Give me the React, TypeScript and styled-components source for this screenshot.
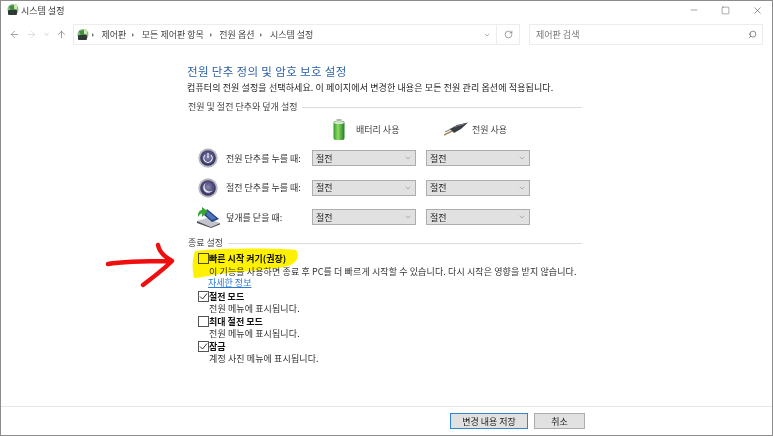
import React from 'react'
import styled, { createGlobalStyle } from 'styled-components'
import { ArrowLeft, ArrowRight, ArrowUp, ChevronDown, Minus, RotateCw, Search, Square, X } from 'lucide-react'

const GlobalStyle = createGlobalStyle`
	html, body {
		margin: 0;
		padding: 0;
		background: #fff;
		overflow: hidden;
	}
	body {
		font-family: 'Noto Sans CJK KR', 'Noto Sans', sans-serif;
		font-size: 9px;
		color: #222;
	}
`

const Window = styled.div`
	position: relative;
	box-sizing: border-box;
	width: 773px;
	height: 436px;
	display: flex;
	flex-direction: column;
	background: #fff;
	border: 1px solid #8c8c8c;
	filter: blur(0.3px);
`

const TitleBar = styled.div`
	height: 18px;
	display: flex;
	align-items: center;
	padding-left: 5px;
	gap: 1px;
	color: #333;
`

const Caption = styled.div`
	margin-left: auto;
	display: flex;
	align-items: center;
	gap: 22px;
	padding-right: 9px;
	color: #222;
`

const NavBar = styled.div`
	height: 21px;
	margin-top: 5px;
	display: flex;
	align-items: center;
	padding-right: 9px;
`

const NavButtons = styled.div`
	width: 72px;
	flex: none;
	display: flex;
	align-items: center;
	padding-left: 8px;
	box-sizing: border-box;
	gap: 6px;
`

const AddressBar = styled.div`
	width: 447px;
	height: 21px;
	box-sizing: border-box;
	display: flex;
	align-items: center;
	border: 1px solid #ececec;
	padding-left: 2px;
`

const Crumb = styled.span`
	color: #444;
	margin-right: 4px;
`

const CrumbSep = styled.span`
	width: 0;
	height: 0;
	margin: 0 7.5px 0 2px;
	border-left: 2.5px solid #777;
	border-top: 2.5px solid transparent;
	border-bottom: 2.5px solid transparent;
`

const AddressEnd = styled.div`
	margin-left: auto;
	display: flex;
	align-items: center;
	height: 100%;
`

const RefreshCell = styled.div`
	width: 22px;
	height: 100%;
	margin-left: 5px;
	display: flex;
	align-items: center;
	justify-content: center;
	border-left: 1px solid #ececec;
	color: #555;
`

const SearchBox = styled.div`
	margin-left: 9px;
	flex: 1;
	height: 21px;
	box-sizing: border-box;
	display: flex;
	align-items: center;
	justify-content: space-between;
	border: 1px solid #ececec;
	padding: 0 5px 0 6px;
	color: #777;
`

const Content = styled.div`
	flex: 1;
	padding: 18px 0 0 186px;
	width: 395px;
`

const Heading = styled.div`
	height: 16px;
	line-height: 16px;
	font-size: 11.5px;
	letter-spacing: 0.35px;
	color: #2b5fa8;
	white-space: nowrap;
`

const Description = styled.div`
	height: 14px;
	line-height: 14px;
	margin-top: 2px;
	color: #222;
	letter-spacing: 0.11px;
	white-space: nowrap;
`

const GroupTitle = styled.div<{ $top: number }>`
	height: 14px;
	line-height: 14px;
	margin-top: ${(p) => p.$top}px;
	padding-left: 1px;
	display: flex;
	align-items: center;
	gap: 5px;
	color: #444;
	white-space: nowrap;
	&::after {
		content: '';
		flex: 1;
		height: 1px;
		background: #dcdcdc;
	}
`

const PowerGrid = styled.div`
	display: grid;
	grid-template-columns: 115px 104px 104px;
	column-gap: 10px;
	row-gap: 13.5px;
	margin-top: 4px;
`

const SourceHead = styled.div<{ $inset: number; $gap: number }>`
	height: 22px;
	margin-bottom: -3.5px;
	display: flex;
	align-items: center;
	gap: ${(p) => p.$gap}px;
	padding-left: ${(p) => p.$inset}px;
	color: #444;
	white-space: nowrap;
`

const RowLabel = styled.div`
	height: 16px;
	display: flex;
	align-items: center;
	gap: 8px;
	padding-left: 11px;
	white-space: nowrap;
	color: #333;
`

const IconSlot = styled.span`
	width: 20px;
	height: 20px;
	flex: none;
	display: flex;
	align-items: center;
	justify-content: center;
`

const SelectBox = styled.div`
	height: 16px;
	box-sizing: border-box;
	display: flex;
	align-items: center;
	justify-content: space-between;
	padding: 0 3px 0 3px;
	background: #e1e1e1;
	border: 1px solid #adadad;
	color: #222;
`

const OptionList = styled.div`
	margin-top: 2px;
	padding-left: 11px;
`

const OptionRow = styled.label`
	display: flex;
	align-items: center;
	height: 13px;
	font-weight: 700;
	color: #111;
	white-space: nowrap;
`

const CheckBox = styled.span`
	box-sizing: border-box;
	width: 11px;
	height: 11px;
	flex: none;
	border: 1px solid #555;
	background: #fff;
	display: flex;
	align-items: center;
	justify-content: center;
`

const OptionNote = styled.div<{ $lead?: boolean }>`
	height: ${(p) => (p.$lead ? 11 : 12)}px;
	line-height: 12px;
	margin-top: ${(p) => (p.$lead ? 1 : 0)}px;
	padding-left: 11px;
	color: #333;
	letter-spacing: 0.11px;
	white-space: nowrap;
`

const MoreLink = styled.a`
	display: block;
	height: 13px;
	line-height: 12px;
	margin-left: 10px;
	color: #2a7ad5;
	text-decoration: underline;
`

const Footer = styled.div`
	height: 29px;
	box-sizing: border-box;
	border-top: 1px solid #e6e6e6;
	display: flex;
	justify-content: flex-end;
	gap: 6px;
	padding: 6px 187px 0 0;
`

const Button = styled.button<{ $primary?: boolean }>`
	height: 16px;
	width: ${(p) => (p.$primary ? 78 : 51)}px;
	padding: 0;
	font: inherit;
	color: #222;
	background: #e1e1e1;
	border: 1px solid ${(p) => (p.$primary ? '#2f86d8' : '#adadad')};
`

const Marker = styled.svg`
	position: absolute;
	left: -1px;
	top: -1px;
	width: 773px;
	height: 436px;
	pointer-events: none;
`

const Highlight = styled.path`
	mix-blend-mode: multiply;
	fill: #fff200;
`

const AppIcon = () => (
	<svg width="14" height="14" viewBox="0 0 14 14">
		<circle cx="7" cy="6.5" r="5.5" fill="#8fb98a" />
		<path d="M3 3 L9 2 L11 6 L5 8 Z" fill="#3f8f3d" />
		<rect x="2" y="7" width="9" height="5" rx="1" fill="#2e3a33" />
		<rect x="8" y="1" width="3" height="5" fill="#c9e8b4" />
	</svg>
)

const BatteryIcon = () => (
	<svg width="12" height="21" viewBox="0 0 12 21">
		<defs>
			<linearGradient id="batteryBody" x1="0" x2="1" y1="0" y2="0">
				<stop offset="0" stopColor="#2f9a2c" />
				<stop offset="0.4" stopColor="#8fdc62" />
				<stop offset="1" stopColor="#1f7d25" />
			</linearGradient>
		</defs>
		<rect x="3.5" y="0" width="5" height="2.5" fill="#a8b8a8" />
		<rect x="0.5" y="2" width="11" height="19" rx="2" fill="url(#batteryBody)" />
		<ellipse cx="6" cy="3.5" rx="5" ry="1.6" fill="#d5e6d0" />
	</svg>
)

const PlugIcon = () => (
	<svg width="24" height="14" viewBox="0 0 24 14">
		<path d="M0 13 L8 9" stroke="#a08a5a" strokeWidth="1.5" />
		<path d="M1 10 L7 7" stroke="#8a8a8a" strokeWidth="1.2" />
		<path d="M6 7 L13 3 L24 0.5 L17 7 L10 11 Z" fill="#3a3d42" />
		<path d="M10 5 L20 2" stroke="#7d8288" strokeWidth="1" />
	</svg>
)

const RoundBadge = ({ id, children }: { id: string; children: React.ReactNode }) => (
	<svg width="20" height="20" viewBox="0 0 20 20">
		<defs>
			<radialGradient id={id} cx="0.5" cy="0.45" r="0.6">
				<stop offset="0" stopColor="#8b8ab5" />
				<stop offset="0.75" stopColor="#3f3d6c" />
				<stop offset="1" stopColor="#24234a" />
			</radialGradient>
		</defs>
		<circle cx="10" cy="10" r="9.7" fill="#b9b9be" />
		<circle cx="10" cy="10" r="7.8" fill={`url(#${id})`} />
		{children}
	</svg>
)

const PowerIcon = () => (
	<RoundBadge id="powerFill">
		<path d="M7 7.2 A4.2 4.2 0 1 0 13 7.2" fill="none" stroke="#f2f2f7" strokeWidth="1.2" />
		<path d="M10 5 V10" stroke="#f2f2f7" strokeWidth="1.2" />
	</RoundBadge>
)

const SleepIcon = () => (
	<RoundBadge id="sleepFill">
		<path d="M8 5 A5.2 5.2 0 1 0 15 12 A4.6 4.6 0 0 1 8 5 Z" fill="#ecebf4" />
	</RoundBadge>
)

const LidIcon = () => (
	<svg width="24" height="22" viewBox="0 0 24 22" style={{ flex: 'none' }}>
		<path d="M1 15 L15 21 L24 17 L11 12 Z" fill="#c2c6cc" />
		<path d="M1 15 L1 17 L15 22 L24 18.5 L24 17 L15 21 Z" fill="#50535a" />
		<path d="M8 9 L11 3 L23 13 L16 16 Z" fill="#26407f" />
		<path d="M10 9 L12 5.5 L20.5 12.5 L16 14 Z" fill="#4f74bd" />
		<path d="M6 1 L6 4 C2.5 4.5 2 7 2 11 C3.5 8.5 5 7.5 6 7.5 L6 11 L12 5.5 Z" fill="#3aa537" />
	</svg>
)

const Check = ({ checked }: { checked?: boolean }) => (
	<CheckBox>
		{checked && (
			<svg width="9" height="9" viewBox="0 0 9 9">
				<path d="M1 4.5 L3.5 7 L8 1.5" fill="none" stroke="#333" strokeWidth="1" />
			</svg>
		)}
	</CheckBox>
)

const Select = () => (
	<SelectBox>
		절전
		<ChevronDown size={8} strokeWidth={1.3} color="#666" />
	</SelectBox>
)

const crumbs = ['제어판', '모든 제어판 항목', '전원 옵션', '시스템 설정']

const rows = [
	{ label: '전원 단추를 누를 때:', icon: <PowerIcon /> },
	{ label: '절전 단추를 누를 때:', icon: <SleepIcon /> },
	{ label: '덮개를 닫을 때:', icon: <LidIcon /> },
]

const options = [
	{ title: '절전 모드', note: '전원 메뉴에 표시됩니다.', checked: true },
	{ title: '최대 절전 모드', note: '전원 메뉴에 표시됩니다.', checked: false },
	{ title: '잠금', note: '계정 사진 메뉴에 표시됩니다.', checked: true },
]

const App: React.FC = () => {
	return (
		<Window>
			<GlobalStyle />
			<TitleBar>
				<AppIcon />
				시스템 설정
				<Caption>
					<Minus size={10} strokeWidth={1} />
					<Square size={9} strokeWidth={1} />
					<X size={11} strokeWidth={1} />
				</Caption>
			</TitleBar>
			<NavBar>
				<NavButtons>
					<ArrowLeft size={11} strokeWidth={1.4} color="#777" />
					<ArrowRight size={11} strokeWidth={1.4} color="#ccc" />
					<ChevronDown size={7} strokeWidth={1.6} color="#999" />
					<ArrowUp size={11} strokeWidth={1.4} color="#666" />
				</NavButtons>
				<AddressBar>
					<AppIcon />
					<CrumbSep />
					{crumbs.map((c, i) => (
						<React.Fragment key={c}>
							<Crumb>{c}</Crumb>
							{i < crumbs.length - 1 && <CrumbSep />}
						</React.Fragment>
					))}
					<AddressEnd>
						<ChevronDown size={8} strokeWidth={1.5} color="#666" />
						<RefreshCell>
							<RotateCw size={9} strokeWidth={1.4} />
						</RefreshCell>
					</AddressEnd>
				</AddressBar>
				<SearchBox>
					제어판 검색
					<Search size={9} strokeWidth={1.6} color="#444" style={{ transform: 'scaleX(-1)' }} />
				</SearchBox>
			</NavBar>
			<Content>
				<Heading>전원 단추 정의 및 암호 보호 설정</Heading>
				<Description>컴퓨터의 전원 설정을 선택하세요. 이 페이지에서 변경한 내용은 모든 전원 관리 옵션에 적용됩니다.</Description>
				<GroupTitle $top={5}>전원 및 절전 단추와 덮개 설정</GroupTitle>
				<PowerGrid>
					<span />
					<SourceHead $inset={21} $gap={11}>
						<BatteryIcon />
						배터리 사용
					</SourceHead>
					<SourceHead $inset={18} $gap={4}>
						<PlugIcon />
						전원 사용
					</SourceHead>
					{rows.map((r) => (
						<React.Fragment key={r.label}>
							<RowLabel>
								<IconSlot>{r.icon}</IconSlot>
								{r.label}
							</RowLabel>
							<Select />
							<Select />
						</React.Fragment>
					))}
				</PowerGrid>
				<GroupTitle $top={11}>종료 설정</GroupTitle>
				<OptionList>
					<OptionRow>
						<Check />
						빠른 시작 켜기(권장)
					</OptionRow>
					<OptionNote $lead>이 기능을 사용하면 종료 후 PC를 더 빠르게 시작할 수 있습니다. 다시 시작은 영향을 받지 않습니다.</OptionNote>
					<MoreLink>자세한 정보</MoreLink>
					{options.map((o) => (
						<React.Fragment key={o.title}>
							<OptionRow>
								<Check checked={o.checked} />
								{o.title}
							</OptionRow>
							<OptionNote>{o.note}</OptionNote>
						</React.Fragment>
					))}
				</OptionList>
			</Content>
			<Footer>
				<Button $primary>변경 내용 저장</Button>
				<Button>취소</Button>
			</Footer>
			<Marker viewBox="0 0 773 436">
				<Highlight d="M195 251 C225 248 270 248 296 250 C300 256 298 262 288 266 C272 270 240 271 212 275 C205 277 198 278 194 278 C192 268 192 260 195 251 Z" />
				<path
					d="M108 264 C125 261 150 261 171 261 M158 245 C159 252 165 257 172 261 C163 270 152 278 143 285"
					fill="none"
					stroke="#f00f0f"
					strokeWidth="4.4"
					strokeLinecap="round"
					strokeLinejoin="round"
				/>
			</Marker>
		</Window>
	)
}

export default App
